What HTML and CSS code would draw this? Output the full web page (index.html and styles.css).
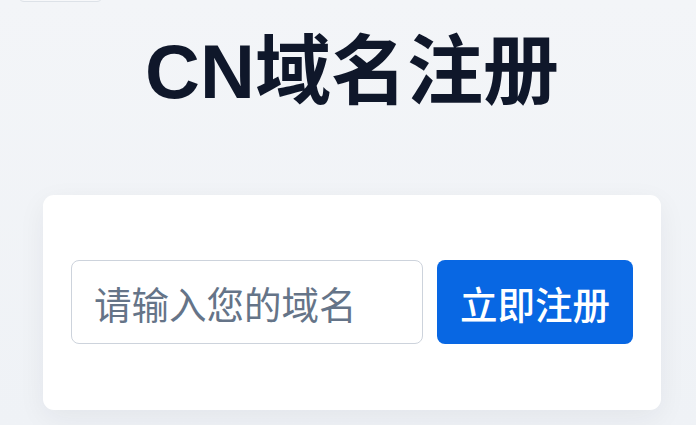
FILE: index.html
```html
<!DOCTYPE html>
<html lang="zh-CN">
<head>
<meta charset="utf-8">
<title>CN域名注册</title>
<link rel="stylesheet" href="styles.css">
</head>
<body>
<div class="page">
  <div class="topbar"><span class="top-chip"></span></div>
  <h1 class="title">CN域名注册</h1>
  <section class="card">
    <form class="search" onsubmit="return false">
      <input class="domain-input" type="text" placeholder="请输入您的域名">
      <button class="register-btn" type="submit">立即注册</button>
    </form>
  </section>
</div>
</body>
</html>
```

FILE: styles.css
```css
html, body {
  margin: 0;
  padding: 0;
}
body {
  background: linear-gradient(180deg, #f3f5f8 0%, #eff2f6 100%);
  height: 425px;
  overflow: hidden;
  font-family: "Liberation Sans", "Noto Sans CJK SC", sans-serif;
}
.page {
  padding-left: 8px;
  display: flex;
  flex-direction: column;
  align-items: center;
}
.topbar {
  align-self: stretch;
  height: 3px;
  display: flex;
}
.top-chip {
  display: block;
  margin-left: 10px;
  margin-top: -30px;
  width: 85px;
  height: 32px;
  box-sizing: border-box;
  border: 1px solid #dde2e8;
  border-radius: 6px;
  background: #f7f8fa;
}
.title {
  margin: 19px 0 0;
  font-size: 76px;
  line-height: 100px;
  font-weight: 700;
  color: #0f172a;
  letter-spacing: 0;
}
.card {
  margin-top: 73px;
  width: 618px;
  box-sizing: border-box;
  padding: 65px 28px 66px;
  background: #ffffff;
  border-radius: 11px;
  box-shadow: 0 8px 28px rgba(30, 41, 59, 0.06);
}
.search {
  display: flex;
  gap: 14px;
  margin: 0;
}
.domain-input {
  flex: 1;
  min-width: 0;
  height: 84px;
  box-sizing: border-box;
  border: 1px solid #cdd3dc;
  border-radius: 8px;
  padding: 0 22px;
  font-family: "Noto Sans CJK SC", sans-serif;
  font-size: 37.5px;
  color: #334155;
  background: #fff;
  outline: none;
}
.domain-input::placeholder {
  color: #657488;
}
.register-btn {
  width: 196px;
  height: 84px;
  border: none;
  border-radius: 8px;
  background: #0867e3;
  color: #ffffff;
  font-family: "Noto Sans CJK SC", sans-serif;
  font-size: 37.5px;
  font-weight: 500;
  padding: 0;
  cursor: pointer;
}
```
